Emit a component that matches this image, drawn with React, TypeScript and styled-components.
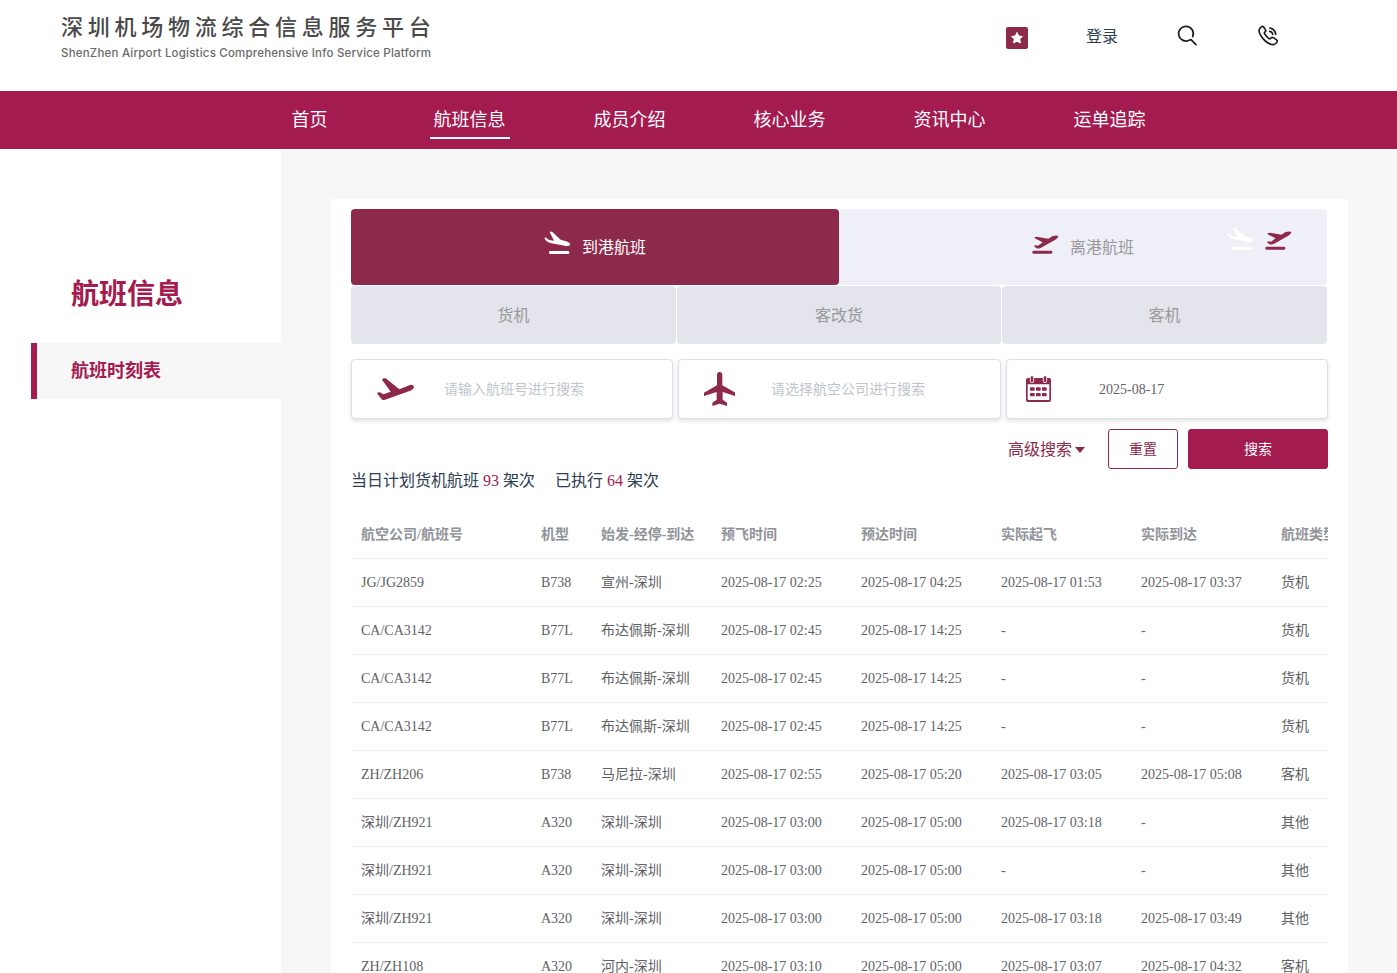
import React from "react";
import styled, { createGlobalStyle } from "styled-components";

const BRAND = "#a41b50";
const WINE = "#8d294b";

const GlobalStyle = createGlobalStyle`
  * { box-sizing: border-box; }
  body {
    margin: 0;
    background: #fff;
    color: #2c3e50;
    font-family: "Liberation Serif", "Noto Sans CJK SC", serif;
    font-size: 16px;
  }
  svg { display: block; flex: none; }
`;

const Page = styled.div`
  display: flex;
  flex-direction: column;
  height: 973px;
  overflow: hidden;
`;

const Header = styled.header`
  display: flex;
  justify-content: space-between;
  flex: none;
  height: 91px;
  padding: 0 118px 0 61px;
`;

const Brand = styled.div`
  padding-top: 10px;
  white-space: nowrap;
`;

const BrandName = styled.div`
  font-family: "Noto Sans CJK SC", sans-serif;
  font-size: 22px;
  font-weight: 500;
  line-height: 30px;
  letter-spacing: 4.75px;
  color: #4a4a4a;
`;

const BrandSub = styled.div`
  font-family: Inter, sans-serif;
  font-size: 11.5px;
  font-weight: 500;
  line-height: 16px;
  margin-top: 5px;
  letter-spacing: 0.205px;
  color: #6a6a6a;
`;

const Tools = styled.div`
  display: flex;
  align-items: flex-start;
`;

const StarBadge = styled.div`
  display: grid;
  place-items: center;
  width: 22px;
  height: 22px;
  margin: 27px 58px 0 0;
  border-radius: 2px;
  background: ${WINE};
`;

const Login = styled.a`
  width: 32px;
  margin: 25px 59px 0 0;
  line-height: 24px;
`;

const ToolIcon = styled.div<{ $gap?: number }>`
  margin: 25px ${(p) => p.$gap ?? 0}px 0 0;
`;

const Nav = styled.nav`
  display: flex;
  gap: 80px;
  flex: none;
  height: 58px;
  padding-left: 270px;
  background: ${BRAND};
`;

const NavItem = styled.a<{ $active?: boolean }>`
  width: 80px;
  height: 48px;
  padding: 16px 1px 0 0;
  border-bottom: 2px solid ${(p) => (p.$active ? "#fff" : "transparent")};
  color: #fff;
  font-size: 18px;
  line-height: 26px;
  text-align: center;
  white-space: nowrap;
`;

const Body = styled.div`
  display: flex;
  flex: 1;
  min-height: 0;
`;

const Sidebar = styled.aside`
  flex: none;
  width: 281px;
  padding: 126px 0 0 31px;
`;

const SideTitle = styled.h1`
  margin: 0 0 28px 40px;
  font-size: 28px;
  line-height: 40px;
  color: ${BRAND};
`;

const SideItem = styled.div`
  height: 56px;
  padding-left: 34px;
  border-left: 6px solid ${BRAND};
  background: #f7f7f7;
  color: ${BRAND};
  font-size: 18px;
  font-weight: bold;
  line-height: 57px;
`;

const Main = styled.main`
  flex: 1;
  min-width: 0;
  padding: 50px 49px 0 50px;
  background: #f7f7f7;
`;

const Card = styled.section`
  height: 100%;
  padding: 10px 20px 0;
  background: #fff;
  overflow: hidden;
`;

const TypeTabs = styled.div`
  display: flex;
  width: 976px;
  height: 76px;
  margin-bottom: 1px;
`;

const TypeTab = styled.div<{ $active?: boolean }>`
  position: relative;
  display: flex;
  flex: 1;
  justify-content: center;
  gap: 11px;
  border-radius: 4px;
  background: ${(p) => (p.$active ? WINE : "#efeff8")};
  color: ${(p) => (p.$active ? "#fff" : "#999")};
  line-height: 78px;
`;

const TabIcon = styled.span<{ $top: number }>`
  padding-top: ${(p) => p.$top}px;
`;

const SpareIcons = styled.div`
  position: absolute;
  top: 18px;
  right: 35px;
  display: flex;
  align-items: flex-end;
  gap: 11px;

  svg:last-child { margin-bottom: 1px; }
`;

const KindTabs = styled.div`
  display: grid;
  grid-template-columns: 325px 324px 325px;
  gap: 1px;
  height: 58px;
  margin-bottom: 15px;
`;

const KindTab = styled.div`
  height: 58px;
  border-radius: 4px;
  background: #e4e4ed;
  color: #999;
  line-height: 60px;
  text-align: center;
`;

const Fields = styled.div`
  display: grid;
  grid-template-columns: 322px 323px 322px;
  gap: 5px;
  height: 60px;
  margin-bottom: 10px;
`;

const Field = styled.div<{ $filled?: boolean }>`
  display: flex;
  align-items: center;
  border: 1px solid #dcdfe6;
  border-radius: 4px;
  box-shadow: 0 2px 4px rgba(0, 0, 0, 0.12);
  background: #fff;
  color: ${(p) => (p.$filled ? "#606266" : "#c0c4cc")};
  font-size: 14px;
  line-height: 20px;
`;

const FieldText = styled.span`
  padding-top: 2px;
`;

const FieldIcon = styled.div<{ $left: number }>`
  width: 92px;
  padding-left: ${(p) => p.$left}px;
`;

const Actions = styled.div`
  display: flex;
  justify-content: flex-end;
  height: 40px;
`;

const Advanced = styled.a`
  display: flex;
  align-items: center;
  gap: 3px;
  height: 40px;
  padding-top: 2px;
  margin-right: 23px;
  color: ${WINE};
  line-height: 24px;
`;

const Caret = styled.i`
  border: 5px solid transparent;
  border-top: 6px solid ${WINE};
  border-bottom: 0;
`;

const Button = styled.button<{ $primary?: boolean }>`
  width: ${(p) => (p.$primary ? 140 : 70)}px;
  height: 40px;
  margin-left: ${(p) => (p.$primary ? 10 : 0)}px;
  padding: 2px 0 0;
  border: 1px solid ${(p) => (p.$primary ? BRAND : WINE)};
  border-radius: 3px;
  background: ${(p) => (p.$primary ? BRAND : "#fff")};
  color: ${(p) => (p.$primary ? "#fff" : WINE)};
  font: 14px/20px "Liberation Serif", "Noto Sans CJK SC", serif;
`;

const Summary = styled.div`
  display: flex;
  gap: 20px;
  height: 41px;
  line-height: 24px;
  white-space: pre;
`;

const Count = styled.span`
  color: ${BRAND};
`;

const Table = styled.div`
  width: 977px;
  overflow: hidden;
`;

const Row = styled.div<{ $head?: boolean }>`
  display: grid;
  grid-template-columns: 180px 60px 120px 140px 140px 140px 140px 140px;
  width: 1060px;
  height: ${(p) => (p.$head ? 49 : 48)}px;
  border-bottom: 1px solid #ebeef5;
  color: ${(p) => (p.$head ? "#909399" : "#606266")};
  font-size: 14px;
  font-weight: ${(p) => (p.$head ? "bold" : "normal")};
  line-height: ${(p) => (p.$head ? 50 : 47)}px;
`;

const Cell = styled.div`
  height: 47px;
  padding-left: 10px;
  white-space: nowrap;
`;

const LandingIcon = ({ color }: { color: string }) => (
  <svg width="27" height="24" viewBox="0 0 81 72" fill={color}>
    <path d="M1 21L6 19Q10 26 16 27L30 29L17 3Q20 0 25 3L50 26L66 31Q79 35 78 41Q77 46 66 45L22 37Q7 34 1 21Z" />
    <rect x="15" y="60" width="61" height="9" rx="4" />
  </svg>
);

const TakeoffIcon = () => (
  <svg width="27" height="19" viewBox="0 0 81 57" fill={WINE}>
    <path d="M49 11L62 3Q76 -1 79 4Q79 8 70 14L30 37Q20 43 12 39L6 33Q8 29 18 32L32 22L8 10Q6 6 13 5Z" />
    <rect x="1" y="47" width="60" height="9" rx="4" />
  </svg>
);

const FlightIcon = () => (
  <svg width="37" height="22" viewBox="0 0 111 66" fill={WINE}>
    <path d="M0 46Q3 42 9 43L19 49L41 41L15 5Q17 0 26 1L67 34L99 21Q110 19 111 27Q111 32 100 38L24 65Q18 67 14 64Z" />
  </svg>
);

const AirlineIcon = () => (
  <svg width="31.3" height="34" viewBox="0 0 94 102" fill={WINE}>
    <path d="M47 0Q55 0 55 9V40L94 62V72L56 60V83L69 92V102L47 95L25 102V92L38 83V60L0 72V62L39 40V9Q39 0 47 0Z" />
  </svg>
);

const CalendarIcon = () => (
  <svg width="25" height="26" viewBox="0 0 75 78" fill={WINE}>
    <path fillRule="evenodd" d="M5 6H70Q75 6 75 12V71Q75 78 69 78H6Q0 78 0 71V12Q0 6 5 6ZM5 25V69Q5 72 8 72H67Q70 72 70 69V25Z" />
    <g stroke="#fff" strokeWidth="2.5">
      <rect x="13" y="-1" width="10" height="21" rx="5" />
      <rect x="52" y="-1" width="10" height="21" rx="5" />
    </g>
    {[12, 30, 48].map((x) => (
      <React.Fragment key={x}>
        <rect x={x} y="34" width="14" height="10" rx="2" />
        <rect x={x} y="51" width="14" height="10" rx="2" />
      </React.Fragment>
    ))}
  </svg>
);

const StarIcon = () => (
  <svg width="14" height="14" viewBox="0 0 14 14" fill="#fff" stroke="#fff" strokeWidth="1" strokeLinejoin="round">
    <path d="M7 1.5L8.7 5L12.4 5.5L9.7 8.1L10.4 12L7 10.2L3.6 12L4.3 8.1L1.6 5.5L5.3 5Z" />
  </svg>
);

const SearchIcon = () => (
  <svg width="21" height="22" viewBox="0 0 63 66" fill="none" stroke="#1c1c1c" strokeWidth="5" strokeLinecap="round">
    <path d="M47 35A22 22 0 1 0 38 45L42 44L57 59" strokeLinejoin="round" />
  </svg>
);

const PhoneIcon = () => (
  <svg width="21" height="22" viewBox="0 0 63 66" fill="none" stroke="#1c1c1c" strokeWidth="5" strokeLinecap="round" strokeLinejoin="round">
    <path d="M11 5Q4 8 3 16Q3 26 15 41Q29 57 43 59Q53 59 57 51Q59 47 55 44L46 38Q42 36 39 39Q36 43 32 40Q25 34 20 27Q18 23 21 21Q25 18 22 14L17 6Q14 3 11 5Z" />
    <path d="M35 9Q51 11 53 28M35 19Q43 20 44 28" />
  </svg>
);

const navItems = ["首页", "航班信息", "成员介绍", "核心业务", "资讯中心", "运单追踪"];
const columns = ["航空公司/航班号", "机型", "始发-经停-到达", "预飞时间", "预达时间", "实际起飞", "实际到达", "航班类型"];

const day = (time: string) => (time === "-" ? time : `2025-08-17 ${time}`);

const flights: string[][] = [
  ["JG/JG2859", "B738", "宣州-深圳", "02:25", "04:25", "01:53", "03:37", "货机"],
  ["CA/CA3142", "B77L", "布达佩斯-深圳", "02:45", "14:25", "-", "-", "货机"],
  ["CA/CA3142", "B77L", "布达佩斯-深圳", "02:45", "14:25", "-", "-", "货机"],
  ["CA/CA3142", "B77L", "布达佩斯-深圳", "02:45", "14:25", "-", "-", "货机"],
  ["ZH/ZH206", "B738", "马尼拉-深圳", "02:55", "05:20", "03:05", "05:08", "客机"],
  ["深圳/ZH921", "A320", "深圳-深圳", "03:00", "05:00", "03:18", "-", "其他"],
  ["深圳/ZH921", "A320", "深圳-深圳", "03:00", "05:00", "-", "-", "其他"],
  ["深圳/ZH921", "A320", "深圳-深圳", "03:00", "05:00", "03:18", "03:49", "其他"],
  ["ZH/ZH108", "A320", "河内-深圳", "03:10", "05:00", "03:07", "04:32", "客机"],
];

export default function App() {
  return (
    <Page>
      <GlobalStyle />
      <Header>
        <Brand>
          <BrandName>深圳机场物流综合信息服务平台</BrandName>
          <BrandSub>ShenZhen Airport Logistics Comprehensive Info Service Platform</BrandSub>
        </Brand>
        <Tools>
          <StarBadge><StarIcon /></StarBadge>
          <Login>登录</Login>
          <ToolIcon $gap={60}><SearchIcon /></ToolIcon>
          <ToolIcon><PhoneIcon /></ToolIcon>
        </Tools>
      </Header>
      <Nav>
        {navItems.map((item, i) => (
          <NavItem key={item} $active={i === 1}>{item}</NavItem>
        ))}
      </Nav>
      <Body>
        <Sidebar>
          <SideTitle>航班信息</SideTitle>
          <SideItem>航班时刻表</SideItem>
        </Sidebar>
        <Main>
          <Card>
            <TypeTabs>
              <TypeTab $active>
                <TabIcon $top={22}><LandingIcon color="#fff" /></TabIcon>
                到港航班
              </TypeTab>
              <TypeTab>
                <TabIcon $top={26}><TakeoffIcon /></TabIcon>
                离港航班
                <SpareIcons>
                  <LandingIcon color="#fff" />
                  <TakeoffIcon />
                </SpareIcons>
              </TypeTab>
            </TypeTabs>
            <KindTabs>
              <KindTab>货机</KindTab>
              <KindTab>客改货</KindTab>
              <KindTab>客机</KindTab>
            </KindTabs>
            <Fields>
              <Field>
                <FieldIcon $left={25}><FlightIcon /></FieldIcon>
                <FieldText>请输入航班号进行搜索</FieldText>
              </Field>
              <Field>
                <FieldIcon $left={25}><AirlineIcon /></FieldIcon>
                <FieldText>请选择航空公司进行搜索</FieldText>
              </Field>
              <Field $filled>
                <FieldIcon $left={19}><CalendarIcon /></FieldIcon>
                <FieldText>2025-08-17</FieldText>
              </Field>
            </Fields>
            <Actions>
              <Advanced>高级搜索<Caret /></Advanced>
              <Button>重置</Button>
              <Button $primary>搜索</Button>
            </Actions>
            <Summary>
              <span>当日计划货机航班 <Count>93</Count> 架次</span>
              <span>已执行 <Count>64</Count> 架次</span>
            </Summary>
            <Table>
              <Row $head>
                {columns.map((c) => <Cell key={c}>{c}</Cell>)}
              </Row>
              {flights.map((flight, r) => (
                <Row key={r}>
                  {flight.map((value, c) => (
                    <Cell key={c}>{c > 2 && c < 7 ? day(value) : value}</Cell>
                  ))}
                </Row>
              ))}
            </Table>
          </Card>
        </Main>
      </Body>
    </Page>
  );
}
